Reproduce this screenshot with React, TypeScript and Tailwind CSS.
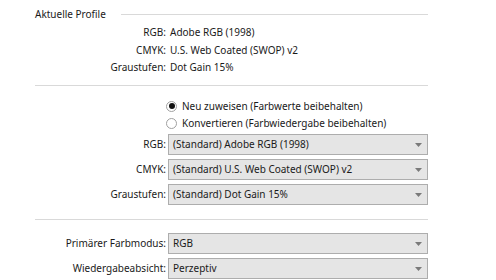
import React from 'react';

const FONT = "font-['Noto_Sans','Open_Sans',sans-serif]";

function InfoRow({ label, value }: { label: string; value: string }) {
  return (
    <div className="flex items-center h-[17.5px]">
      <div className="w-[131px] text-right">{label}</div>
      <div className="ml-[4px]">{value}</div>
    </div>
  );
}

function Select({ value }: { value: string }) {
  return (
    <div className="relative flex items-center h-[21px] w-[260px] border border-[#adadad] bg-[#e5e5e5] pl-[4px]">
      <span>{value}</span>
      <svg className="absolute right-[5px] top-[8px]" width="7" height="4" viewBox="0 0 7 4">
        <path d="M0 0 L7 0 L3.5 4 Z" fill="#7a7a7a" />
      </svg>
    </div>
  );
}

function SelectRow({ label, value }: { label: string; value: string }) {
  return (
    <div className="flex items-center">
      <div className="text-right w-[131px]">{label}</div>
      <div className="ml-[2px]">
        <Select value={value} />
      </div>
    </div>
  );
}

function Radio({ checked, label }: { checked: boolean; label: string }) {
  return (
    <div className="flex items-center h-[17.5px] pl-[131px]">
      <span className="w-[11px] h-[11px] rounded-full border border-[#a0a0a0] bg-white flex items-center justify-center">
        {checked && <span className="w-[6px] h-[6px] rounded-full bg-[#111]" />}
      </span>
      <span className="ml-[5px]">{label}</span>
    </div>
  );
}

export default function App() {
  return (
    <div className={`w-[496px] h-[280px] bg-white overflow-hidden text-[10px] text-[#1a1a1a] ${FONT}`}>
      <div className="pl-[35px] w-[428px] pt-[6px]">
        {/* Aktuelle Profile */}
        <div className="flex items-center h-[17px]">
          <span>Aktuelle Profile</span>
          <div className="flex-1 ml-[15px] h-px bg-[#d9d9d9]" />
        </div>
        <div className="mt-[1px]">
          <InfoRow label="RGB:" value="Adobe RGB (1998)" />
          <InfoRow label="CMYK:" value="U.S. Web Coated (SWOP) v2" />
          <InfoRow label="Graustufen:" value="Dot Gain 15%" />
        </div>
        <div className="mt-[8px] h-px bg-[#d9d9d9]" />

        <div className="mt-[12px]">
          <Radio checked label="Neu zuweisen (Farbwerte beibehalten)" />
          <Radio checked={false} label="Konvertieren (Farbwiedergabe beibehalten)" />
        </div>
        <div className="mt-[1px] flex flex-col gap-[4px]">
          <SelectRow label="RGB:" value="(Standard) Adobe RGB (1998)" />
          <SelectRow label="CMYK:" value="(Standard) U.S. Web Coated (SWOP) v2" />
          <SelectRow label="Graustufen:" value="(Standard) Dot Gain 15%" />
        </div>
        <div className="mt-[14px] h-px bg-[#d9d9d9]" />

        <div className="mt-[13px] flex flex-col gap-[4px]">
          <SelectRow label="Primärer Farbmodus:" value="RGB" />
          <SelectRow label="Wiedergabeabsicht:" value="Perzeptiv" />
        </div>
      </div>
    </div>
  );
}
